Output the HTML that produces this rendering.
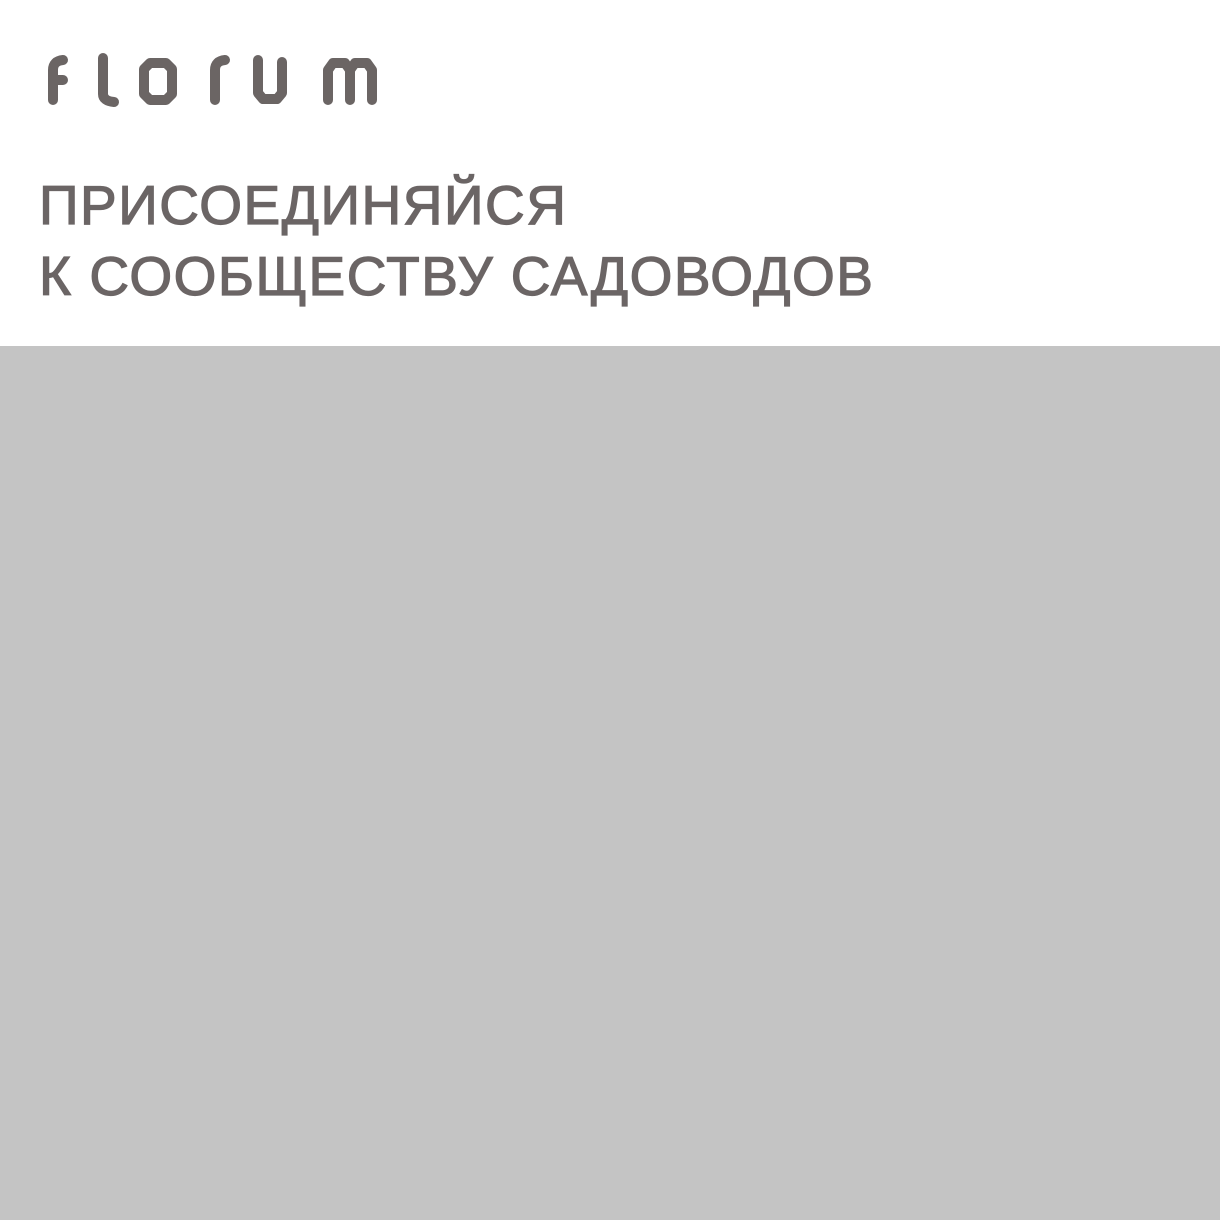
<!DOCTYPE html>
<html><head><meta charset="utf-8"><style>
html,body{margin:0;padding:0;width:1220px;height:1220px;background:#fff;overflow:hidden}
.logo{position:absolute;left:0;top:0}
.t{position:absolute;left:39px;font-family:"Liberation Sans",sans-serif;font-size:55px;color:#6b6565;white-space:nowrap;line-height:1;letter-spacing:1.5px;-webkit-text-stroke:1.2px #6b6565}
.g{position:absolute;left:0;top:346px;width:1220px;height:874px;background:#c4c4c4}
</style></head><body>
<svg class="logo" width="400" height="120" viewBox="0 0 400 120" fill="none" stroke="#6b6564" stroke-width="10" stroke-linecap="round" stroke-linejoin="round">
<path d="M53 100 V70 Q53 61 63 60"/>
<path d="M53 80 H63"/>
<path d="M103 58 V94 Q103 101 114 102"/>
<path d="M150 63 H166 L172 69 V94 L166 100 H150 L144 94 V69 Z"/>
<path d="M215 100 V70 Q215 61 225 60"/>
<path d="M258 60 V93 L263 99 H277 L282 93 V62"/>
<path d="M328 100 V70 L333 63 H345 L350 70 V100 M350 70 L355 63 H367 L372 70 V100"/>
</svg>
<div class="t" style="top:178px">ПРИСОЕДИНЯЙСЯ</div>
<div class="t" style="top:249px">К СООБЩЕСТВУ САДОВОДОВ</div>
<div class="g"></div>
</body></html>
